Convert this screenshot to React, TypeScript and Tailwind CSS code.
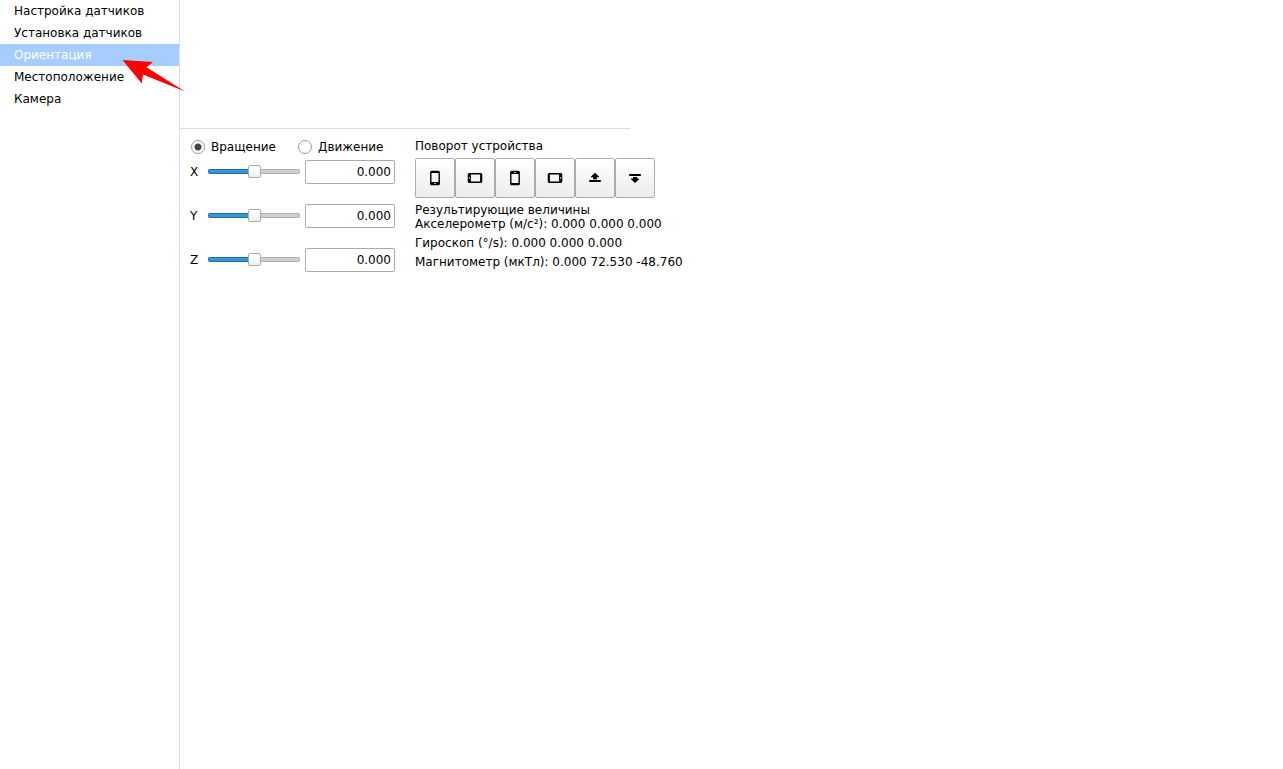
import React, { useState } from 'react';
import clsx from 'clsx';

type Axis = 'x' | 'y' | 'z';
type Mode = 'rotate' | 'move';

interface Rotation {
  id: string;
  label: string;
  icon: React.ReactNode;
}

const PAGES = ['Настройка датчиков', 'Установка датчиков', 'Ориентация', 'Местоположение', 'Камера'];

const AXES: { id: Axis; label: string }[] = [
  { id: 'x', label: 'X' },
  { id: 'y', label: 'Y' },
  { id: 'z', label: 'Z' },
];

const PhoneIcon = ({ className }: { className?: string }) => (
  <svg viewBox="0 0 16 16" className={clsx('size-4', className)} aria-hidden="true">
    <path
      fillRule="evenodd"
      d="M4.700.7h6.600A1.600 1.600 0 0 1 12.900 2.300v11.400a1.600 1.600 0 0 1-1.600 1.600H4.700a1.600 1.600 0 0 1-1.600-1.600V2.300A1.600 1.600 0 0 1 4.700.7zM4.500 2.900v9.200h7V2.900zM7 13.300v.8h2v-.8z"
    />
  </svg>
);

const FaceUpIcon = () => (
  <svg viewBox="0 0 16 16" className="size-4" aria-hidden="true">
    <path d="M8 2.700l4 3.800v.8h-2V9.200H6V7.300H4v-.8zM2.200 10h11.600v2H2.200z" />
  </svg>
);

const FaceDownIcon = () => (
  <svg viewBox="0 0 16 16" className="size-4" aria-hidden="true">
    <path d="M2.200 4h11.600v2H2.200zM6 7h4v1.500h2v.8l-4 3.800-4-3.800v-.8h2z" />
  </svg>
);

const ROTATIONS: Rotation[] = [
  { id: 'portrait', label: 'Портретная', icon: <PhoneIcon /> },
  { id: 'landscape', label: 'Альбомная', icon: <PhoneIcon className="rotate-90" /> },
  { id: 'portrait-reverse', label: 'Портретная (перевёрнутая)', icon: <PhoneIcon className="rotate-180" /> },
  { id: 'landscape-reverse', label: 'Альбомная (перевёрнутая)', icon: <PhoneIcon className="-rotate-90" /> },
  { id: 'face-up', label: 'Экраном вверх', icon: <FaceUpIcon /> },
  { id: 'face-down', label: 'Экраном вниз', icon: <FaceDownIcon /> },
];

const READINGS = [
  'Акселерометр (м/с²): 0.000 0.000 0.000',
  'Гироскоп (°/s): 0.000 0.000 0.000',
  'Магнитометр (мкТл): 0.000 72.530 -48.760',
];

// Filled part in blue up to the thumb, grey after it; the second pair paints the border
const trackBackground = (value: number) => {
  const stop = `${((value + 180) / 360) * 100}%`;
  return [
    `linear-gradient(90deg, #3498db ${stop}, #d0d0d0 ${stop}) padding-box`,
    `linear-gradient(90deg, #246b9b ${stop}, #adadad ${stop}) border-box`,
  ].join(', ');
};

interface ModeRadioProps {
  value: Mode;
  label: string;
  current: Mode;
  onChange: (mode: Mode) => void;
}

const ModeRadio = ({ value, label, current, onChange }: ModeRadioProps) => (
  <label className="flex items-center gap-1.5">
    <input
      type="radio"
      name="mode"
      value={value}
      checked={current === value}
      onChange={() => onChange(value)}
      className="size-3.5 appearance-none rounded-full border border-[#9a9a9a] bg-white checked:bg-[radial-gradient(circle,#454545_3px,#fff_4px)]"
    />
    {label}
  </label>
);

interface AxisRowProps {
  id: Axis;
  label: string;
  value: number;
  onChange: (value: number) => void;
}

const AxisRow = ({ id, label, value, onChange }: AxisRowProps) => (
  <div className="flex h-6 items-center">
    <label htmlFor={`axis-${id}`} className="w-[18px]">
      {label}
    </label>
    <input
      id={`axis-${id}`}
      type="range"
      min={-180}
      max={180}
      value={value}
      onChange={(e) => onChange(Number(e.target.value))}
      style={{ background: trackBackground(value) }}
      className="mb-px h-[5px] w-[92px] appearance-none rounded-xs border border-transparent [&::-webkit-slider-runnable-track]:h-[3px] [&::-webkit-slider-thumb]:mt-[-5px] [&::-webkit-slider-thumb]:size-[13px] [&::-webkit-slider-thumb]:appearance-none [&::-webkit-slider-thumb]:rounded-xs [&::-webkit-slider-thumb]:border [&::-webkit-slider-thumb]:border-[#ababab] [&::-webkit-slider-thumb]:bg-linear-to-b [&::-webkit-slider-thumb]:from-white [&::-webkit-slider-thumb]:to-[#eeeeee]"
    />
    <input
      type="text"
      aria-label={label}
      value={value.toFixed(3)}
      onChange={(e) => onChange(Number(e.target.value) || 0)}
      className="ml-[5px] h-6 w-[90px] rounded-xs border border-[#ababab] bg-white px-[3px] text-right"
    />
  </div>
);

export default function App() {
  const [page, setPage] = useState('Ориентация');
  const [mode, setMode] = useState<Mode>('rotate');
  const [angles, setAngles] = useState<Record<Axis, number>>({ x: 0, y: 0, z: 0 });

  return (
    <div className="flex min-h-screen bg-white font-['DejaVu_Sans',sans-serif] text-[12px] leading-[14px] text-black">
      {/* Page list */}
      <nav className="relative w-[180px] shrink-0 border-r border-[#dcdcdc]">
        {PAGES.map((name) => (
          <button
            key={name}
            type="button"
            onClick={() => setPage(name)}
            className={clsx(
              'block h-[22px] w-full px-3.5 text-left',
              name === page && 'bg-[#a6cdff] text-white'
            )}
          >
            {name}
          </button>
        ))}
        {/* Pointer over the active page */}
        <svg
          viewBox="0 0 63 32"
          className="pointer-events-none absolute top-[60px] left-[122px] h-8 w-[63px]"
          aria-hidden="true"
        >
          <path d="M.5 0L31 2 24.500 7.200 63 31.500 21 14.500 19.800 23.500Z" fill="#ff0000" />
        </svg>
      </nav>

      <main className="min-w-0 flex-1">
        {/* Device preview */}
        <div className="h-[129px] max-w-[450px] border-b border-[#dcdcdc]" />

        <div className="flex gap-5 px-2.5 pt-2.5">
          <section className="shrink-0">
            <div className="grid h-4 grid-cols-[107px_auto] items-center pl-px">
              <ModeRadio value="rotate" label="Вращение" current={mode} onChange={setMode} />
              <ModeRadio value="move" label="Движение" current={mode} onChange={setMode} />
            </div>
            <div className="mt-[5px] space-y-5">
              {AXES.map((axis) => (
                <AxisRow
                  key={axis.id}
                  id={axis.id}
                  label={axis.label}
                  value={angles[axis.id]}
                  onChange={(value) => setAngles({ ...angles, [axis.id]: value })}
                />
              ))}
            </div>
          </section>

          <section>
            <h2>Поворот устройства</h2>
            <div className="mt-[5px] flex">
              {ROTATIONS.map((rotation) => (
                <button
                  key={rotation.id}
                  type="button"
                  aria-label={rotation.label}
                  className="flex size-10 items-center justify-center rounded-xs border border-[#ababab] bg-linear-to-b from-white to-[#ececec]"
                >
                  {rotation.icon}
                </button>
              ))}
            </div>
            <h2 className="mt-[5px]">Результирующие величины</h2>
            <div className="space-y-[5px]">
              {READINGS.map((reading) => (
                <p key={reading}>{reading}</p>
              ))}
            </div>
          </section>
        </div>
      </main>
    </div>
  );
}
